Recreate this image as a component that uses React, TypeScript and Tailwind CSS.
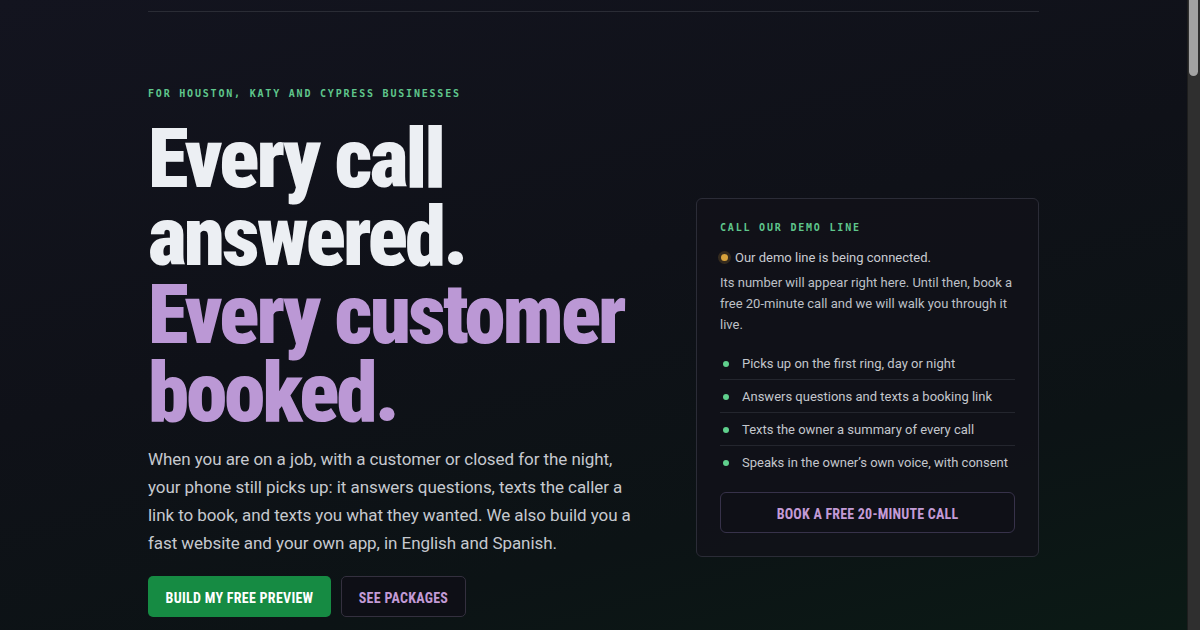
import React from "react";

const body = { fontFamily: "Roboto, 'Liberation Sans', sans-serif" } as React.CSSProperties;
const cond = { fontFamily: "Roboto, sans-serif", fontStretch: "75%" } as React.CSSProperties;

function Dot() {
  return <span className="mt-[7px] h-[6px] w-[6px] shrink-0 rounded-full bg-[#5fd08c]" />;
}

const items = [
  "Picks up on the first ring, day or night",
  "Answers questions and texts a booking link",
  "Texts the owner a summary of every call",
  "Speaks in the owner\u2019s own voice, with consent",
];

export default function App() {
  return (
    <div className="flex h-screen overflow-hidden">
      <main className="h-screen flex-1 overflow-hidden bg-[linear-gradient(165deg,#13141f_0%,#0f1118_45%,#0c1315_75%,#0b1a15_100%)]">
        <div className="mx-auto w-[891px]">
          <div className="h-[12px] border-b border-[#2a2c35]" />
          <div className="flex items-start justify-between">
            <div className="w-[500px] pt-[75px]">
              <p className="font-['DejaVu_Sans_Mono',monospace] text-[10px] font-bold leading-[14px] tracking-[0.18em] text-[#5fc68c]">
                FOR HOUSTON, KATY AND CYPRESS BUSINESSES
              </p>
              <h1
                className="mt-[19px] font-['Roboto',sans-serif] text-[83px] font-black leading-[78px] tracking-[-0.035em] text-[#eceff3]"
                style={{ fontStretch: "75%" }}
              >
                Every call
                <br />
                answered.
                <br />
                <span className="text-[#bb98d5]">
                  Every customer
                  <br />
                  booked.
                </span>
              </h1>
              <p className="mt-[13px] whitespace-nowrap text-[17px] leading-[28px] tracking-[-0.004em] text-[#c6c9cf]" style={body}>
                When you are on a job, with a customer or closed for the night,
                <br />
                your phone still picks up: it answers questions, texts the caller a
                <br />
                link to book, and texts you what they wanted. We also build you a
                <br />
                fast website and your own app, in English and Spanish.
              </p>
              <div className="mt-[19px] flex gap-[10px]" style={cond}>
                <button className="h-[41px] w-[183px] rounded-[5px] bg-[#168b43] pt-[3px] text-[14px] font-bold tracking-[0.02em] text-white">
                  BUILD MY FREE PREVIEW
                </button>
                <button className="h-[41px] w-[125px] rounded-[5px] border border-[#34303f] bg-[#0e0f16] pt-[3px] text-[14px] font-bold tracking-[0.02em] text-[#c39bd6]">
                  SEE PACKAGES
                </button>
              </div>
            </div>
            <div className="mt-[186px] w-[343px] rounded-[6px] border border-[#2b2c37] bg-[#111219]/80 px-[23px] pb-[23px] pt-[22px]">
              <p className="font-['DejaVu_Sans_Mono',monospace] text-[10px] font-bold leading-[14px] tracking-[0.18em] text-[#5fc68c]">
                CALL OUR DEMO LINE
              </p>
              <div className="mt-[12px] flex items-center gap-[7px] text-[13px] leading-[21px] text-[#c9cbd1]" style={body}>
                <span className="ml-[1px] h-[7px] w-[7px] rounded-full bg-[#d8a23c] shadow-[0_0_0_3px_rgba(216,162,60,0.18)]" />
                Our demo line is being connected.
              </div>
              <p className="mt-[4px] text-[13px] leading-[21px] text-[#bdc0c7]" style={body}>
                Its number will appear right here. Until then, book a
                <br />
                free 20-minute call and we will walk you through it
                <br />
                live.
              </p>
              <ul className="mt-[12px]" style={body}>
                {items.map((t, i) => (
                  <li
                    key={t}
                    className={
                      "flex items-start gap-[13px] pl-[3px] pt-[7px] pb-[5px] text-[13px] leading-[20px] text-[#c3c6cc] " +
                      (i < items.length - 1 ? "border-b border-[#24262e]" : "")
                    }
                  >
                    <Dot />
                    {t}
                  </li>
                ))}
              </ul>
              <button
                className="mt-[14px] h-[41px] w-full rounded-[6px] border border-[#37324a] bg-[#0f1017] pt-[3px] text-[14px] font-bold tracking-[0.015em] text-[#c39bd6]"
                style={cond}
              >
                BOOK A FREE 20-MINUTE CALL
              </button>
            </div>
          </div>
        </div>
      </main>
      <div className="h-screen w-[13px] shrink-0 border-l border-[#1e1e1e] bg-[#2f2f2f] pl-[1px] pr-[2px]">
        <div className="h-[76px] w-full rounded-b-full bg-[#a3a3a3]" />
      </div>
    </div>
  );
}
